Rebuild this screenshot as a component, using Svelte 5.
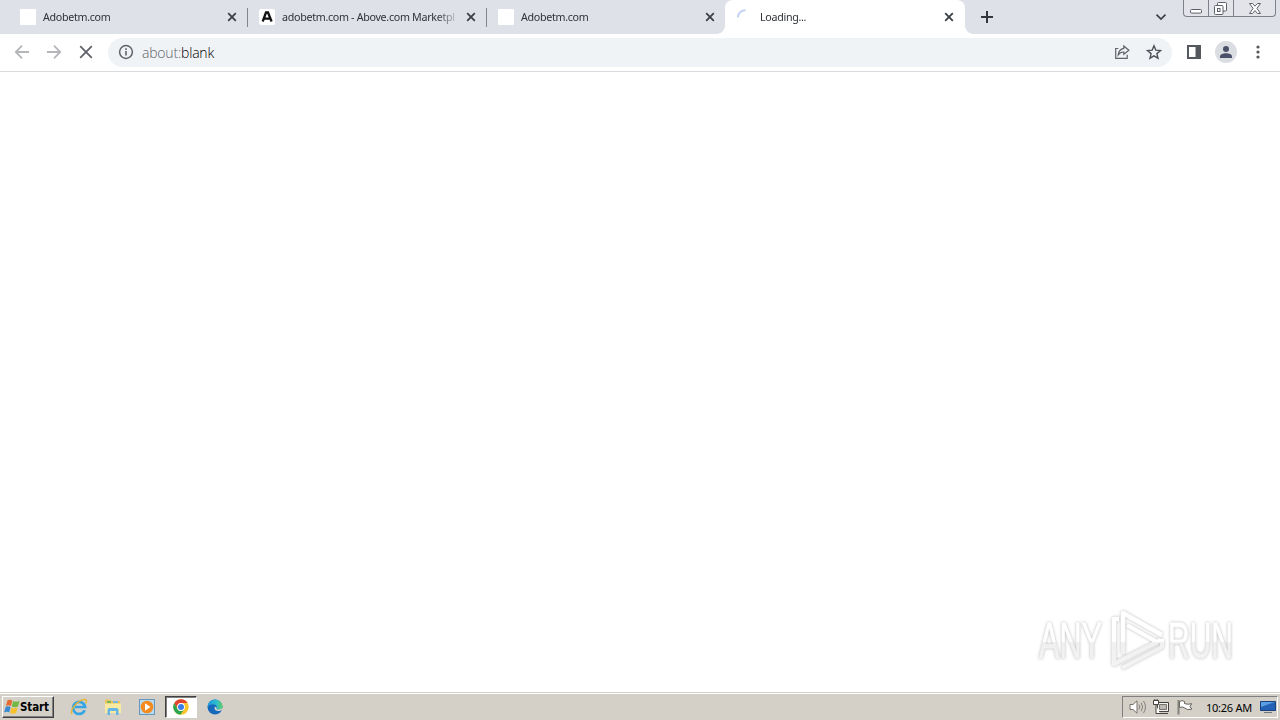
<script lang="ts">
  type Tab = { title: string; icon: string; active?: boolean };

  const tabs: Tab[] = [
    { title: 'Adobetm.com', icon: 'blank' },
    { title: 'adobetm.com - Above.com Marketpl', icon: 'above' },
    { title: 'Adobetm.com', icon: 'blank' },
    { title: 'Loading...', icon: 'spinner', active: true }
  ];
</script>

<div class="desktop">
  <!-- Tab strip -->
  <header class="tabstrip">
    {#each tabs as tab, i}
      <div class="tab" class:active={tab.active} class:divided={i < 2}>
        {#if tab.icon === 'spinner'}
          <svg class="favicon" viewBox="0 0 16 16">
            <path d="M1 8.5A7 7 0 0 1 8.5 1.2" fill="none" stroke="#c3d3f3" stroke-width="2" />
          </svg>
        {:else if tab.icon === 'above'}
          <svg class="favicon" viewBox="0 0 16 16">
            <rect width="16" height="16" rx="2" fill="#fff" />
            <path d="M3.7 12.5 7 3.5h2l3.6 9M5 9.6h6" fill="none" stroke="#111" stroke-width="2.3" />
          </svg>
        {:else}
          <span class="favicon blank"></span>
        {/if}
        <span class="title">{tab.title}</span>
        <svg class="close" width="10" height="10" viewBox="0 0 10 10">
          <path d="M1.2 1.2 8.8 8.8M8.8 1.2 1.2 8.8" stroke="#3c4043" stroke-width="1.8" />
        </svg>
      </div>
    {/each}
    <svg class="new-tab" width="14" height="14" viewBox="0 0 14 14">
      <path d="M7 1v12M1 7h12" stroke="#33363d" stroke-width="2" />
    </svg>
    <svg class="tab-search" width="12" height="8" viewBox="0 0 12 8">
      <path d="m1.5 1.7 4.5 4.3 4.5-4.3" fill="none" stroke="#3c4043" stroke-width="1.7" />
    </svg>
    <div class="window-buttons">
      <span class="wb min">
        <svg width="12" height="6" viewBox="0 0 12 6"><rect x=".5" y="1.5" width="11" height="3.6" rx="1" fill="#fff" stroke="#5c6068" /></svg>
      </span>
      <span class="wb max">
        <svg width="13" height="13" viewBox="0 0 13 13">
          <rect x="3.5" y=".5" width="9" height="8.5" rx="1" fill="#fff" stroke="#5c6068" />
          <rect x=".5" y="3.5" width="8.5" height="9" rx="1" fill="#fff" stroke="#5c6068" />
          <rect x="3.5" y="6.5" width="2.5" height="3" fill="none" stroke="#5c6068" />
        </svg>
      </span>
      <span class="wb exit">
        <svg width="12" height="11" viewBox="0 0 12 11">
          <path d="M.5.5h3L6 3.2 8.5.5h3L7.9 5.4l3.6 5.1h-3L6 7.6l-2.5 2.9h-3l3.6-5.1Z" fill="#fff" stroke="#5c6068" />
        </svg>
      </span>
    </div>
  </header>

  <!-- Toolbar -->
  <div class="toolbar">
    <svg class="nav" width="16" height="16" viewBox="0 0 16 16">
      <path d="M15 8H2M8 1.7 1.8 8 8 14.3" fill="none" stroke="#b4b6b9" stroke-width="1.8" />
    </svg>
    <svg class="nav" width="16" height="16" viewBox="0 0 16 16">
      <path d="M1 8h13M8 1.7 14.2 8 8 14.3" fill="none" stroke="#b4b6b9" stroke-width="1.8" />
    </svg>
    <svg class="nav" width="16" height="16" viewBox="0 0 16 16">
      <path d="m2.2 2.2 11.6 11.6M13.8 2.2 2.2 13.8" stroke="#5f6368" stroke-width="1.8" />
    </svg>
    <div class="omnibox">
      <svg width="16" height="16" viewBox="0 0 16 16">
        <circle cx="8" cy="8" r="6.4" fill="none" stroke="#5f6368" stroke-width="1.5" />
        <path d="M8 7v4.5M8 4.3v1.6" stroke="#5f6368" stroke-width="1.6" />
      </svg>
      <span class="url"><span class="scheme">about:</span>blank</span>
      <svg class="share" width="16" height="16" viewBox="0 0 16 16">
        <path d="M4.3 4.5H1.7v9.8h11.5v-3.5M9.8 2l5.1 4.2-5.1 4.1V8C7.3 7.9 5.7 8.8 4.2 10.9 4.6 7.2 6.4 4.9 9.8 4.3Z" fill="none" stroke="#5f6368" stroke-width="1.2" />
      </svg>
      <svg class="star" width="16" height="16" viewBox="0 0 16 16">
        <path d="m8 1.8 1.8 4.3 4.7.4-3.6 3.1 1.1 4.6L8 11.8l-4 2.4 1.1-4.6-3.6-3.1 4.7-.4Z" fill="none" stroke="#4f5359" stroke-width="1.4" />
      </svg>
    </div>
    <svg class="panel" width="14" height="14" viewBox="0 0 14 14">
      <path d="M1 1h12v12H1z" fill="#fff" stroke="#55585d" stroke-width="2" />
      <path d="M8.5 1H13v12H8.5z" fill="#55585d" />
    </svg>
    <svg class="avatar" width="22" height="22" viewBox="0 0 22 22">
      <circle cx="11" cy="11" r="11" fill="#dadde2" />
      <circle cx="11" cy="8" r="3" fill="#4a5069" />
      <path d="M5 17v-1.5c0-2.2 3.2-3.3 6-3.3s6 1.1 6 3.3V17z" fill="#4a5069" />
    </svg>
    <svg class="dots" width="4" height="14" viewBox="0 0 4 14">
      <circle cx="2" cy="2" r="1.6" fill="#55585d" />
      <circle cx="2" cy="7" r="1.6" fill="#55585d" />
      <circle cx="2" cy="12" r="1.6" fill="#55585d" />
    </svg>
  </div>

  <!-- Page with watermark -->
  <main class="page">
    <svg class="watermark" width="210" height="72" viewBox="0 0 210 72">
      <defs>
        <linearGradient id="fade" x1="0" y1="0" x2="0" y2="72" gradientUnits="userSpaceOnUse">
          <stop offset=".53" stop-color="#fff" />
          <stop offset=".53" stop-color="#f0f0f0" />
          <stop offset="1" stop-color="#f5f5f5" />
        </linearGradient>
      </defs>
      <g class="mark">
        <text x="9" y="54" textLength="63" lengthAdjust="spacingAndGlyphs">ANY</text>
        <text x="138" y="54" textLength="65" lengthAdjust="spacingAndGlyphs">RUN</text>
        <path d="M93 50V9l39 22" fill="none" stroke="url(#fade)" stroke-width="4.5" stroke-linejoin="round" />
        <path d="M89 15h-5v45l47-24" fill="none" stroke="url(#fade)" stroke-width="4.5" stroke-linejoin="round" />
        <path d="M92 64 132 43v-8M97 21l30 17" fill="none" stroke="url(#fade)" stroke-width="4" stroke-linejoin="round" />
      </g>
    </svg>
  </main>

  <!-- Taskbar -->
  <footer class="taskbar">
    <div class="start">
      <svg width="16" height="16" viewBox="0 0 16 16">
        <path d="M3.5 1.3C5.2.3 6.7.5 8.3 1.4L7 7C5.2 6 3.8 6 1.9 6.9Z" fill="#e66a32" />
        <path d="M9.1 1.9c1.8 1 3.8 1 6.4 0L14 7.5c-2 .9-4.2.9-6.2 0Z" fill="#72b944" />
        <path d="M1.6 7.9c1.6-.8 3.3-.7 5 0L5.2 13.5c-1.5-.9-3.2-.9-5.1.1Z" fill="#388bd0" />
        <path d="M7.5 8.5c1.8.9 4 .9 6.2 0l-1.5 5.5c-2 .9-4.2.9-6.1 0Z" fill="#f8c12b" />
      </svg>
      <span class="start-label">Start</span>
    </div>
    <div class="launch">
      <div class="app">
        <svg width="18" height="18" viewBox="0 0 18 18">
          <path d="M14.7 12.3A6 6 0 1 1 15.1 9H5" fill="none" stroke="#35a5e4" stroke-width="2.7" />
          <path d="M2.1 16C-.4 13 5 5 11.4 2.2c4.7-2 6 .1 4.3 3.2" fill="none" stroke="#e5b52e" stroke-width="1.4" />
        </svg>
      </div>
      <div class="app">
        <svg width="18" height="18" viewBox="0 0 18 18">
          <path d="M1 3V1.5h5L7.5 3H16v9H1z" fill="#e9c65d" />
          <path d="M3 3h4v2H3z" fill="#7bb55a" />
          <path d="M9 3h5v2H9z" fill="#78b9dc" />
          <path d="M1 5.5h16V15H1z" fill="#fae9a0" />
          <path d="M3.5 17v-5q0-2 2-2h7q2 0 2 2v5H12v-4H6v4z" fill="#65b6e4" />
        </svg>
      </div>
      <div class="app">
        <svg width="18" height="18" viewBox="0 0 18 18">
          <rect x="1.5" y="1.5" width="15" height="15" fill="#bad9ee" stroke="#6399c1" />
          <circle cx="9" cy="9" r="6.3" fill="#f28a1d" />
          <path d="m7 5.2 5.5 3.8L7 12.8z" fill="#fff" />
        </svg>
      </div>
      <div class="app pressed">
        <svg width="16" height="16" viewBox="0 0 16 16">
          <circle cx="8" cy="8" r="7.7" fill="#f9c52b" />
          <path d="M1.3 4.1A7.7 7.7 0 0 1 14.7 4.1H8A4 4 0 0 0 4.5 10Z" fill="#e24434" />
          <path d="M1.3 4.1A7.7 7.7 0 0 0 7.3 15.7L11 10.5A4 4 0 0 1 4.5 10Z" fill="#2da44e" />
          <circle cx="8" cy="8" r="3.9" fill="#fff" />
          <circle cx="8" cy="8" r="3" fill="#3b7de9" />
        </svg>
      </div>
      <div class="app">
        <svg width="16" height="16" viewBox="0 0 17 17">
          <defs>
            <linearGradient id="edge" x1="0" y1="0" x2="1" y2="0">
              <stop offset="0" stop-color="#2196dc" />
              <stop offset=".6" stop-color="#2fbdd0" />
              <stop offset="1" stop-color="#61cf5c" />
            </linearGradient>
          </defs>
          <circle cx="8.5" cy="8.5" r="8" fill="#1769bb" />
          <path d="M.5 8.5A8 8 0 0 1 16.5 8.3c0 3-2.7 3.6-6 3-1-.3.1-1 .1-2.2C10.6 4.5 3 4.3.5 8.5Z" fill="url(#edge)" />
          <path d="M8.4 8q-1.6 4 3 4.8 2.6.3 4.6-1l1-.8-1-1.2q-2.300 1.900-5.600 1.200-.6-.5 0-1.800Z" fill="#d5d3ce" />
        </svg>
      </div>
    </div>
    <div class="tray">
      <svg width="18" height="16" viewBox="0 0 18 16">
        <path d="M1 5.500h3L8 1.800v12.400L4 10.500H1z" fill="#fff" stroke="#74716c" />
        <path d="M10 5.500q1.500 2.500 0 5M12.200 3.700q2.800 4.300 0 8.600M14.500 2q4 6 0 12" fill="none" stroke="#85827c" />
      </svg>
      <svg class="network" width="17" height="16" viewBox="0 0 17 16">
        <path d="M4.500 3.500h11v9h-11zM7 14.500h8" fill="#f4f2ee" stroke="#45433f" />
        <path d="M6.500 5.500h7v5h-7z" fill="#bbb8b1" stroke="#77746f" />
        <path d="M.5 1.500v4h5v-4zM1.800 0v2M4.200 0v2M3 6v8.500h4" fill="#fff" stroke="#45433f" />
      </svg>
      <svg class="flag" width="16" height="16" viewBox="0 0 16 16">
        <path d="M1.500 1v14.500" stroke="#85827c" stroke-width="2" />
        <path d="M2.500 2.500q2.700-1.800 5 0v2q3 1.400 7.200.2L13 7.500l1.800 2.700q-4.700 1.300-7.100-1.200Q5.500 7.200 2.500 8.500Z" fill="#fff" stroke="#66635e" />
      </svg>
      <span class="clock">10:26 AM</span>
      <svg class="show-desktop" width="16" height="14" viewBox="0 0 16 14">
        <path d="M.5 1.500h15v9H.5z" fill="#2461b4" stroke="#17427d" />
        <path d="M1 2h14L1 7z" fill="#5a9ee4" />
        <path d="M4 12.500h8" stroke="#71767b" />
      </svg>
    </div>
  </footer>
</div>

<style>
  :global(body) {
    margin: 0;
    overflow: hidden;
  }

  .desktop {
    display: flex;
    flex-direction: column;
    width: 1280px;
    height: 720px;
    background: #fff;
    font-family: "Noto Sans", "DejaVu Sans", sans-serif;
    overflow: hidden;
  }

  svg {
    display: block;
    flex: none;
  }

  .tabstrip {
    display: flex;
    height: 34px;
    box-sizing: border-box;
    padding-left: 9px;
    background: #dee1e8;
    flex: none;
  }

  .tab {
    display: flex;
    align-items: center;
    box-sizing: border-box;
    width: 239px;
    height: 34px;
    padding: 0 11px;
    flex: none;
    position: relative;
  }

  .tab.divided::after {
    content: "";
    position: absolute;
    right: 0;
    top: 8px;
    width: 1px;
    height: 19px;
    background: #80868b;
  }

  .tab.active {
    width: 240px;
    margin-left: -1px;
    padding-left: 12px;
    background: #fff;
    border-radius: 8px 8px 0 0;
  }

  .tab.active::before,
  .tab.active::after {
    content: "";
    position: absolute;
    bottom: 0;
    width: 8px;
    height: 8px;
  }

  .tab.active::before {
    left: -8px;
    background: radial-gradient(circle at 0 0, #dee1e8 7.5px, #fff 8px);
  }

  .tab.active::after {
    right: -8px;
    background: radial-gradient(circle at 100% 0, #dee1e8 7.5px, #fff 8px);
  }

  .favicon {
    width: 16px;
    height: 16px;
    flex: none;
  }

  .blank {
    background: #fff;
    border-radius: 1px;
  }

  .title {
    width: 176px;
    margin-left: 7px;
    font-size: 10.7px;
    line-height: 18px;
    letter-spacing: -0.3px;
    color: #2f3237;
    white-space: nowrap;
    -webkit-mask-image: linear-gradient(90deg, #000 155px, transparent 178px);
    mask-image: linear-gradient(90deg, #000 155px, transparent 178px);
  }

  .close {
    margin-left: 8px;
  }

  .new-tab {
    margin: 10px 0 0 15px;
  }

  .tab-search {
    margin: 13px 16px 0 auto;
  }

  .window-buttons {
    display: flex;
    box-sizing: border-box;
    width: 93px;
    height: 17px;
    margin-right: 4px;
    border: 1px solid #7d818a;
    border-top: none;
    border-radius: 0 0 4px 4px;
    background: #e2e4ea;
  }

  .wb {
    display: flex;
    align-items: center;
    justify-content: center;
    box-sizing: border-box;
    width: 25px;
    border-right: 1px solid #7d818a;
  }

  .wb.min {
    padding-top: 5px;
  }

  .wb.max {
    padding-right: 2px;
  }

  .wb.exit {
    flex: 1;
    border-right: none;
  }

  .toolbar {
    display: flex;
    align-items: center;
    box-sizing: border-box;
    height: 38px;
    padding: 0 20px 1px 14px;
    border-bottom: 1px solid #d8dadd;
    background: #fff;
    flex: none;
  }

  .nav {
    margin-right: 16px;
  }

  .omnibox {
    display: flex;
    align-items: center;
    box-sizing: border-box;
    width: 1064px;
    height: 29px;
    margin-left: -2px;
    padding: 0 10px;
    border-radius: 15px;
    background: #f0f3f6;
  }

  .url {
    margin: 0 auto 0 8px;
    padding-top: 1px;
    font-family: "Open Sans", "Noto Sans", sans-serif;
    font-size: 14px;
    font-weight: 300;
    line-height: 20px;
    letter-spacing: -0.2px;
    color: #000;
  }

  .scheme {
    color: #5f6368;
  }

  .star {
    margin-left: 16px;
  }

  .panel {
    margin-left: 15px;
  }

  .avatar {
    margin-left: 14px;
  }

  .dots {
    margin-left: 19px;
  }

  .page {
    display: flex;
    flex: 1;
    align-items: flex-end;
    justify-content: flex-end;
    padding: 0 40px 16px 0;
  }

  .watermark {
    overflow: visible;
  }

  .mark {
    filter: drop-shadow(0 0 1.5px rgba(0, 0, 0, 0.28));
  }

  .mark text {
    font-family: "Liberation Sans", sans-serif;
    font-size: 50px;
    fill: url(#fade);
    stroke: url(#fade);
    stroke-width: 0.8px;
  }

  .taskbar {
    display: flex;
    align-items: center;
    box-sizing: border-box;
    height: 28px;
    padding: 1px 2px 0;
    border-top: 1px solid #d4d0c8;
    box-shadow: inset 0 1px #fff;
    background: #d4d0c8;
    flex: none;
  }

  .start {
    display: flex;
    align-items: center;
    box-sizing: border-box;
    width: 52px;
    height: 22px;
    padding-left: 1px;
    border: 1px solid;
    border-color: #fff #404040 #404040 #fff;
    box-shadow: inset -1px -1px #808080;
  }

  .start-label {
    font-family: "DejaVu Sans Condensed", "DejaVu Sans", sans-serif;
    font-size: 11.5px;
    font-weight: 700;
    letter-spacing: -0.1px;
    color: #000;
  }

  .launch {
    display: flex;
    gap: 2px;
    margin-left: 9px;
  }

  .app {
    display: flex;
    align-items: center;
    justify-content: center;
    box-sizing: border-box;
    width: 32px;
    height: 22px;
  }

  .app.pressed {
    border: 1px solid;
    border-color: #404040 #fff #fff #404040;
    box-shadow: inset 1px 1px #808080;
    background: #fff;
  }

  .tray {
    display: flex;
    align-items: center;
    box-sizing: border-box;
    width: 156px;
    height: 22px;
    margin-left: auto;
    padding-left: 6px;
    border: 1px solid;
    border-color: #808080 #fff #fff #808080;
  }

  .network {
    margin-left: 6px;
  }

  .flag {
    margin-left: 7px;
  }

  .clock {
    width: 47px;
    margin-left: 13px;
    font-size: 11px;
    letter-spacing: -0.25px;
    white-space: nowrap;
    color: #000;
  }

  .show-desktop {
    margin-left: 7px;
  }
</style>
